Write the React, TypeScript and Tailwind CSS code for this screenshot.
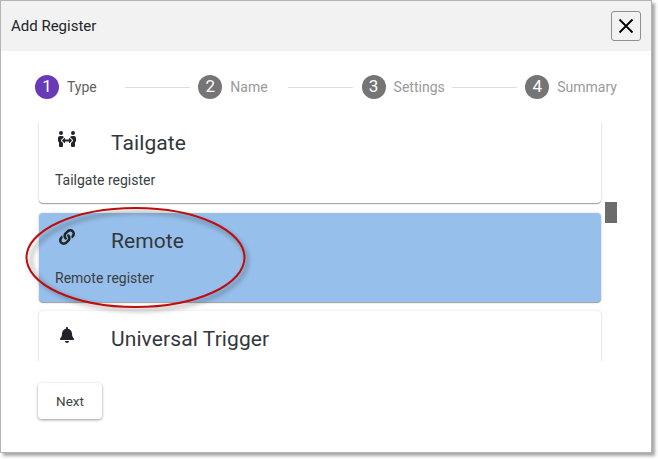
import React from "react";
import { FaBell, FaLink, FaPeopleArrows } from "react-icons/fa";

const steps = [
  { n: 1, label: "Type", active: true },
  { n: 2, label: "Name", active: false },
  { n: 3, label: "Settings", active: false },
  { n: 4, label: "Summary", active: false },
];

function Card({ icon, title, desc, selected, className }: { icon: React.ReactNode; title: string; desc?: string; selected?: boolean; className: string }) {
  return (
    <div className={`rounded-[4px] pl-4 pr-4 shadow-[0_1px_1px_rgba(0,0,0,0.35),0_0_3px_rgba(0,0,0,0.14)] shrink-0 ${selected ? "bg-[#97bfeb]" : "bg-white"} ${className}`}>
      <div className="flex items-start h-[38px]">
        <div className="w-[56px] pt-[3px] text-[#212529] text-[16px] leading-none">
          <div className="w-[24px] flex justify-center">{icon}</div>
        </div>
        <div className="text-[21px] leading-[30px] tracking-[0.1px] text-[#33373c]">{title}</div>
      </div>
      {desc && <div className="text-[14px] leading-[20px] text-[#3a3e42] mt-[4px]">{desc}</div>}
    </div>
  );
}

export default function App() {
  return (
    <div className="w-[658px] h-[459px] bg-white relative overflow-hidden" style={{ fontFamily: "Roboto, sans-serif" }}>
      <div className="w-[652px] h-[453px] border border-[#b4b4b4] bg-white shadow-[3px_3px_3px_rgba(0,0,0,0.35)] flex flex-col">
        <div className="h-[50px] bg-[#f2f2f2] flex items-center justify-between pl-[10px] pr-[10px] shrink-0">
          <span className="text-[15px] text-[#212529]">Add Register</span>
          <button className="w-[30px] h-[30px] border border-[#8f8f8f] rounded-[3px] flex items-center justify-center bg-[#f2f2f2]">
            <svg width="16" height="16" viewBox="0 0 16 16" fill="none" stroke="#000" strokeWidth="1.8"><path d="M1.5 1.5 14.5 14.5M14.5 1.5 1.5 14.5" /></svg>
          </button>
        </div>
        <div className="grid grid-cols-[163.3px_163.3px_163.7px_auto] items-center pl-[34px] mt-[24px] h-[24px] shrink-0">
          {steps.map((s, i) => (
            <div key={s.n} className="flex items-center justify-between">
              <div className="flex items-center gap-[8px]">
                <div className={`w-[24px] h-[24px] rounded-full flex items-center justify-center text-white text-[17px] ${s.active ? "bg-[#673ab7]" : "bg-[#757575]"}`}>{s.n}</div>
                <span className={`text-[14px] ${s.active ? "text-[#5f5f5f]" : "text-[#9a9a9a]"}`}>{s.label}</span>
              </div>
              {i < 3 && <div className="w-[65px] h-px bg-[#dedede] mr-[8.5px]" />}
            </div>
          ))}
        </div>
        <div className="mt-[23px] ml-[36px] pl-[2px] pr-[2px] w-[566px] h-[239px] overflow-hidden flex flex-col shrink-0">
          <Card className="h-[81px] pt-[6px] rounded-t-none" icon={<FaPeopleArrows className="w-[20px] h-[16px]" />} title="Tailgate" desc="Tailgate register" />
          <Card selected className="h-[89px] mt-[10px] pt-[13px]" icon={<FaLink />} title="Remote" desc="Remote register" />
          <Card className="h-[89px] mt-[9px] pt-[13px]" icon={<FaBell />} title="Universal Trigger" />
        </div>
        <button className="ml-[37px] mt-[22px] w-[64px] h-[36px] rounded-[4px] bg-white text-[13.5px] text-[#444] shadow-[0_1px_3px_rgba(0,0,0,0.4)]">Next</button>
      </div>
      <div className="absolute left-[605px] top-[202px] w-[12px] h-[21px] bg-[#6b6b6b]" />
      <svg className="absolute left-0 top-0 pointer-events-none" width="658" height="459" viewBox="0 0 658 459" fill="none">
        <ellipse cx="139" cy="261" rx="108" ry="49" stroke="#000" strokeOpacity="0.22" strokeWidth="4" style={{ filter: "blur(2px)" }} />
        <ellipse cx="135.5" cy="257.5" rx="109" ry="49.5" stroke="#bf0d0d" strokeWidth="2" />
      </svg>
    </div>
  );
}
